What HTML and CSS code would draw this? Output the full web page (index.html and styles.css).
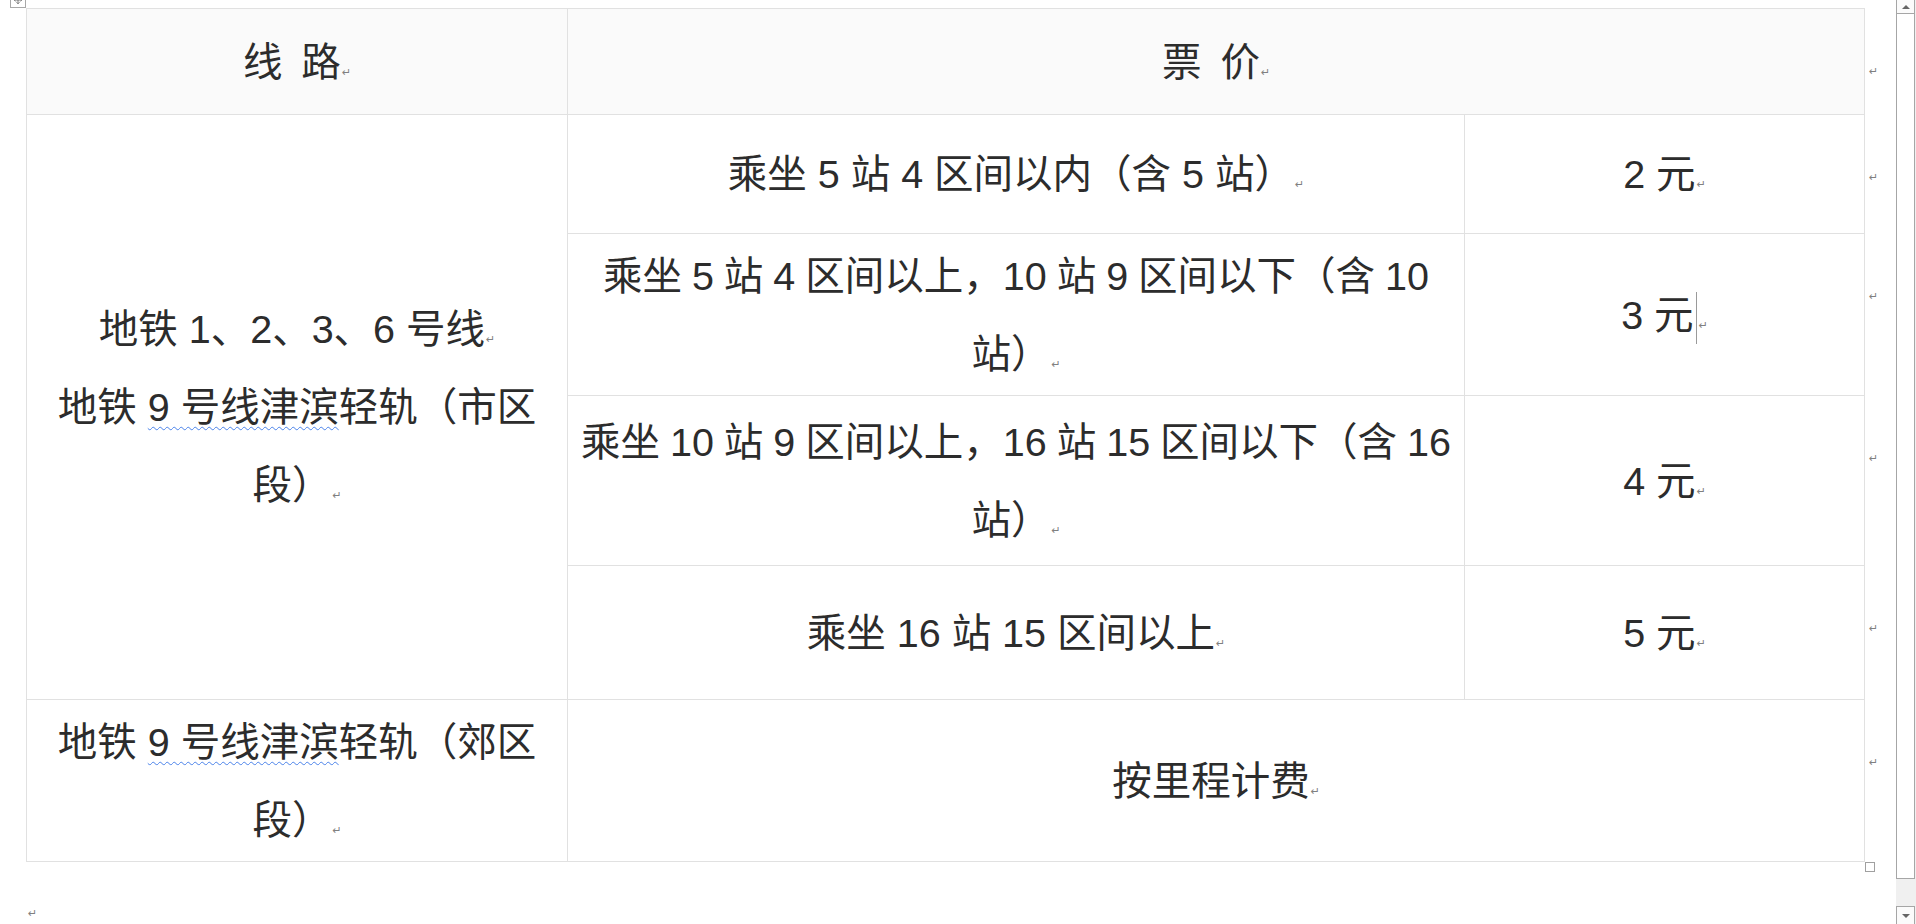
FILE: index.html
```html
<!DOCTYPE html>
<html lang="zh-CN">
<head>
<meta charset="utf-8">
<title>票价</title>
<link rel="stylesheet" href="styles.css">
</head>
<body>
<div class="app">
  <main class="doc">
    <table class="fare">
      <colgroup>
        <col class="c-line">
        <col class="c-range">
        <col class="c-price">
        <col class="c-end">
      </colgroup>
      <tr class="r-head">
        <th class="has-handle"><span class="move-handle"><svg viewBox="0 0 16 16" width="16" height="16"><path d="M8 3v10M3 8h10M8 3l-2 2M8 3l2 2M8 13l-2-2M8 13l2-2M3 8l2-2M3 8l2 2M13 8l-2-2M13 8l-2 2" stroke="#555" stroke-width="1" fill="none"/></svg></span>线 路<span class="pm">↵</span></th>
        <th colspan="2">票 价<span class="pm">↵</span></th>
        <td class="end"><span class="pm">↵</span></td>
      </tr>
      <tr class="r-1">
        <td rowspan="4" class="line-cell">
          <p>地铁 1、2、3、6 号线<span class="pm">↵</span></p>
          <p>地铁 <span class="spell">9 号线津滨</span>轻轨（市区<br>段）<span class="pm">↵</span></p>
        </td>
        <td>乘坐 5 站 4 区间以内（含 5 站）<span class="pm">↵</span></td>
        <td>2 元<span class="pm">↵</span></td>
        <td class="end"><span class="pm">↵</span></td>
      </tr>
      <tr class="r-2">
        <td class="tight">乘坐 5 站 4 区间以上，10 站 9 区间以下（含 10<br>站）<span class="pm">↵</span></td>
        <td>3 元<span class="caret"></span><span class="pm">↵</span></td>
        <td class="end"><span class="pm">↵</span></td>
      </tr>
      <tr class="r-3">
        <td class="tight">乘坐 10 站 9 区间以上，16 站 15 区间以下（含 16<br>站）<span class="pm">↵</span></td>
        <td>4 元<span class="pm">↵</span></td>
        <td class="end"><span class="pm">↵</span></td>
      </tr>
      <tr class="r-4">
        <td>乘坐 16 站 15 区间以上<span class="pm">↵</span></td>
        <td>5 元<span class="pm">↵</span></td>
        <td class="end"><span class="pm">↵</span></td>
      </tr>
      <tr class="r-5">
        <td class="line-cell">地铁 <span class="spell">9 号线津滨</span>轻轨（郊区<br>段）<span class="pm">↵</span></td>
        <td colspan="2" class="has-handle">按里程计费<span class="pm">↵</span><span class="resize-handle"></span></td>
        <td class="end"><span class="pm">↵</span></td>
      </tr>
    </table>
    <p class="tail"><span class="pm">↵</span></p>
  </main>
  <div class="scrollbar">
    <div class="sb-btn sb-up"><span class="tri-up"></span></div>
    <div class="sb-thumb"></div>
    <div class="sb-track"></div>
    <div class="sb-btn sb-down"><span class="tri-down"></span></div>
  </div>
</div>
</body>
</html>
```

FILE: styles.css
```css
html, body {
  margin: 0;
  padding: 0;
  background: #ffffff;
}

body {
  font-family: "Liberation Sans", "Noto Sans CJK SC", sans-serif;
  color: #2c2c2c;
}

.app {
  display: flex;
  height: 924px;
  overflow: hidden;
}

.doc {
  flex: 1;
  min-width: 0;
  padding: 8px 0 0 26px;
}

.fare {
  border-collapse: collapse;
  table-layout: fixed;
  width: 1878px;
  font-size: 39.5px;
}

.c-line { width: 541px; }
.c-range { width: 897px; }
.c-price { width: 400px; }
.c-end { width: 40px; }

.fare th,
.fare td {
  border: 1px solid #e1e1e1;
  padding: 0 6px;
  text-align: center;
  vertical-align: middle;
  line-height: 78px;
  font-weight: normal;
  white-space: nowrap;
}

.fare th {
  background: #fafafa;
  word-spacing: 8px;
}

.fare td.tight {
  word-spacing: -1px;
}

.r-head { height: 106px; }
.r-1 { height: 119px; }
.r-2 { height: 162px; }
.r-3 { height: 170px; }
.r-4 { height: 134px; }
.r-5 { height: 162px; }

.fare td.end {
  border: none;
  background: transparent;
  vertical-align: top;
  text-align: left;
  padding: 46px 0 0 3px;
  line-height: 12px;
}

.line-cell p {
  margin: 0;
}

.pm {
  font-family: "DejaVu Sans", sans-serif;
  font-size: 11px;
  line-height: 1;
  color: #808080;
  margin-left: 1px;
  word-spacing: 0;
}

.spell {
  text-decoration-line: underline;
  text-decoration-style: wavy;
  text-decoration-color: #4a82ea;
  text-decoration-thickness: 1px;
  text-underline-offset: 5px;
  text-decoration-skip-ink: none;
}

.caret {
  display: inline-block;
  width: 1px;
  height: 52px;
  background: #9a9a9a;
  vertical-align: middle;
  margin: 0 1px 0 2px;
}

.has-handle {
  position: relative;
}

.move-handle {
  position: absolute;
  left: -17px;
  top: -17px;
  width: 14px;
  height: 14px;
  border: 1px solid #a8a8a8;
  background: #ffffff;
  display: flex;
  align-items: center;
  justify-content: center;
}

.move-handle svg {
  width: 12px;
  height: 12px;
}

.resize-handle {
  position: absolute;
  right: -11px;
  bottom: -11px;
  width: 8px;
  height: 8px;
  border: 1px solid #a0a0a0;
  background: #ffffff;
}

.tail {
  margin: 44px 0 0 1px;
  line-height: 12px;
}

.scrollbar {
  width: 20px;
  flex: none;
  display: flex;
  flex-direction: column;
  background: #f0f0f0;
}

.sb-btn {
  box-sizing: border-box;
  width: 19px;
  background: #fbfbfb;
  border: 1px solid #a6a6a6;
  display: flex;
  align-items: center;
  justify-content: center;
}

.sb-up {
  height: 14px;
  border-top: none;
}

.sb-down {
  height: 18px;
  border-bottom: none;
}

.sb-thumb {
  box-sizing: border-box;
  width: 19px;
  height: 865px;
  background: #ffffff;
  border: 1px solid #a6a6a6;
  border-top: none;
}

.sb-track {
  flex: 1;
}

.tri-up {
  width: 0;
  height: 0;
  border-left: 4px solid transparent;
  border-right: 4px solid transparent;
  border-bottom: 4px solid #666666;
}

.tri-down {
  width: 0;
  height: 0;
  border-left: 4px solid transparent;
  border-right: 4px solid transparent;
  border-top: 4px solid #666666;
}
```
